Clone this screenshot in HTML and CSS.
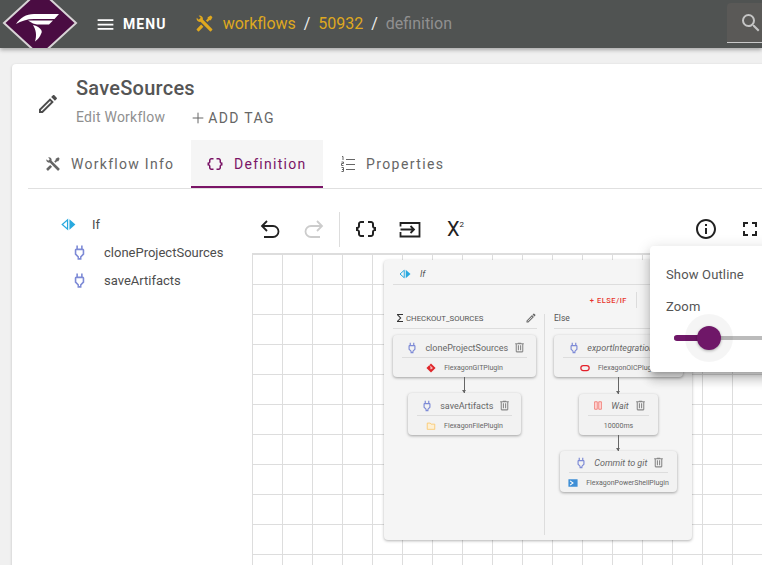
FILE: index.html
```html
<!DOCTYPE html>
<html lang="en">
<head>
<meta charset="utf-8">
<title>SaveSources</title>
<link rel="stylesheet" href="styles.css">
</head>
<body>
<div class="page">
  <header class="bar">
    <svg class="logo" viewBox="0 0 80 48" width="80" height="48">
      <polygon points="40,-10 76,23 40,56 4,23" fill="#4a0c42" stroke="#d8d4d6" stroke-width="2"/>
      <path d="M16 24C20 18 26 14 34 14H59L54.500 19H34C27 19 21 21 16 24Z" fill="#fff"/>
      <path d="M28 20.500H53L49 24.500H37L33 23.500ZM33 25C38 26 44 30 41 34C40 37 38 39 35 41.500C37 35 36 30 33 25Z" fill="#fff"/>
    </svg>
    <button class="menu">
      <svg class="menu-ic" viewBox="0 0 24 24"><path d="M3 18h18v-2H3v2zm0-5h18v-2H3v2zm0-7v2h18V6H3z"/></svg>
      <span>MENU</span>
    </button>
    <nav class="crumbs">
      <svg class="crumb-ic gold" viewBox="0 0 24 24"><use href="#tools"/></svg>
      <span class="gold link">workflows</span>
      <span class="sep">/</span>
      <span class="gold">50932</span>
      <span class="sep">/</span>
      <span class="current">definition</span>
    </nav>
    <div class="search">
      <svg class="ic24" viewBox="0 0 24 24"><path d="M15.500 14h-.79l-.28-.27A6.471 6.471 0 0 0 16 9.500 6.500 6.500 0 1 0 9.500 16c1.610 0 3.090-.59 4.230-1.570l.27.28v.79l5 4.990L20.490 19l-4.990-5zm-6 0C7.010 14 5 11.990 5 9.500S7.010 5 9.500 5 14 7.010 14 9.500 11.990 14 9.500 14z"/></svg>
    </div>
  </header>

  <main class="card">
    <section class="title-row">
      <svg class="edit-ic" viewBox="0 0 24 24"><use href="#pencil"/></svg>
      <div class="title-text">
        <h1>SaveSources</h1>
        <div class="sub">
          <span class="sub-label">Edit Workflow</span>
          <span class="add-tag"><svg viewBox="0 0 24 24"><path d="M20 12H4M12 4v16" fill="none" stroke="#666" stroke-width="1.500"/></svg>ADD TAG</span>
        </div>
      </div>
    </section>

    <div class="tabs">
      <div class="tab tab-info"><svg viewBox="0 0 24 24"><use href="#tools"/></svg>Workflow Info</div>
      <div class="tab tab-def active"><svg viewBox="0 0 24 24"><use href="#braces"/></svg>Definition</div>
      <div class="tab tab-props"><svg viewBox="0 0 14 16"><path d="M5 3.500h9M5 8.500h9M5 13.500h9M1 .5h1v3.500M.5 6h2v1.500h-2V9.500h2M.5 11.500h2v4h-2M1 13.500h1.500" fill="none" stroke="#666" stroke-width="1"/></svg>Properties</div>
    </div>

    <div class="workspace">
      <aside class="tree">
        <div class="tree-row root">
          <svg class="if-ic" viewBox="0 0 24 24"><use href="#if"/></svg><span>If</span>
        </div>
        <div class="tree-row child">
          <svg class="plug" viewBox="0 0 24 24"><use href="#plug"/></svg><span>cloneProjectSources</span>
        </div>
        <div class="tree-row child">
          <svg class="plug" viewBox="0 0 24 24"><use href="#plug"/></svg><span>saveArtifacts</span>
        </div>
      </aside>

      <div class="editor">
        <div class="toolbar">
          <svg class="tool" viewBox="0 0 24 24"><path d="M9 14 4 9l5-5M4 9h11a5.500 5.500 0 0 1 0 11H6" fill="none" stroke="#222" stroke-width="1.800"/></svg>
          <svg class="tool" viewBox="0 0 24 24"><path d="M15 14l5-5-5-5M20 9H9a5.500 5.500 0 0 0 0 11h9" fill="none" stroke="#ccc" stroke-width="1.800"/></svg>
          <span class="tool-div"></span>
          <svg class="tool" viewBox="0 0 24 24"><use href="#braces"/></svg>
          <svg class="tool" viewBox="0 0 24 24"><path d="M2.500 9.500V6h19v13.500h-19V15M2.500 12.500h13.500M12.500 9l3.500 3.500-3.500 3.500" fill="none" stroke="#222" stroke-width="1.800"/></svg>
          <span class="tool x-tool">X<sup>2</sup></span>
          <svg class="tool right" viewBox="0 0 24 24"><path d="M11 7h2v2h-2zm0 4h2v6h-2zm1-9C6.480 2 2 6.480 2 12s4.480 10 10 10 10-4.480 10-10S17.520 2 12 2zm0 18c-4.410 0-8-3.590-8-8s3.590-8 8-8 8 3.590 8 8-3.590 8-8 8z"/></svg>
          <svg class="tool" viewBox="0 0 24 24"><path d="M7 14H5v5h5v-2H7v-3zm-2-4h2V7h3V5H5v5zm12 7h-3v2h5v-5h-2v3zM14 5v2h3v3h2V5h-5z"/></svg>
        </div>

        <div class="canvas">
          <div class="if-card">
            <div class="if-head"><svg viewBox="0 0 24 24"><use href="#if"/></svg><em>If</em></div>
            <div class="if-actions"><span class="else-if">+ ELSE/IF</span><span class="act-div"></span></div>
            <div class="branches">
              <div class="branch first">
                <div class="branch-head"><svg class="sigma" viewBox="0 0 24 24"><path d="M18 6H8.830L14.830 12 8.830 18H18V20H6V18L12 12 6 6V4H18V6Z"/></svg><span>CHECKOUT_SOURCES</span><svg class="br-edit" viewBox="0 0 24 24"><use href="#pencil"/></svg></div>
                <div class="flow">
                  <div class="node w143">
                    <div class="node-top"><svg class="plug" viewBox="0 0 24 24"><use href="#plug"/></svg><span>cloneProjectSources</span><svg class="trash" viewBox="0 0 24 24"><use href="#trash"/></svg></div>
                    <div class="node-sub"><svg viewBox="0 0 24 24"><path d="M12 1 23 12 12 23 1 12Z" fill="#e0272b"/><path d="M9 6l3 3v6M12 12l4 0" stroke="#fff" stroke-width="2" fill="none"/></svg><span>FlexagonGITPlugin</span></div>
                  </div>
                  <div class="arrow"></div>
                  <div class="node w113">
                    <div class="node-top"><svg class="plug" viewBox="0 0 24 24"><use href="#plug"/></svg><span>saveArtifacts</span><svg class="trash" viewBox="0 0 24 24"><use href="#trash"/></svg></div>
                    <div class="node-sub"><svg viewBox="0 0 24 24"><path d="M3 5h7l2 2.500h9V20H3Z" fill="#fdf0d5" stroke="#fbc86b" stroke-width="2"/></svg><span>FlexagonFilePlugin</span></div>
                  </div>
                </div>
              </div>
              <div class="branch second">
                <div class="branch-head"><span>Else</span></div>
                <div class="flow">
                  <div class="node w129 ital">
                    <div class="node-top"><svg class="plug" viewBox="0 0 24 24"><use href="#plug"/></svg><span>exportIntegration</span><svg class="trash" viewBox="0 0 24 24"><use href="#trash"/></svg></div>
                    <div class="node-sub"><svg viewBox="0 0 24 24"><rect x="2" y="6" width="20" height="12" rx="6" fill="none" stroke="#e3202a" stroke-width="3"/></svg><span>FlexagonOICPlugin</span></div>
                  </div>
                  <div class="arrow a17"></div>
                  <div class="node w79 ital short">
                    <div class="node-top n22"><svg viewBox="0 0 24 24" class="pause"><path d="M3 2h7v20H3zM14 2h7v20h-7z" fill="#fdd" stroke="#f0685f" stroke-width="2"/></svg><span>Wait</span><svg class="trash" viewBox="0 0 24 24"><use href="#trash"/></svg></div>
                    <div class="node-sub"><span>10000ms</span></div>
                  </div>
                  <div class="arrow"></div>
                  <div class="node w117 ital short">
                    <div class="node-top n22"><svg class="plug" viewBox="0 0 24 24"><use href="#plug"/></svg><span>Commit to git</span><svg class="trash" viewBox="0 0 24 24"><use href="#trash"/></svg></div>
                    <div class="node-sub"><svg viewBox="0 0 24 24"><rect x="1" y="3" width="22" height="18" fill="#3f8fd6"/><path d="M5 7l7 5-7 5" fill="none" stroke="#fff" stroke-width="2.500"/></svg><span>FlexagonPowerShellPlugin</span></div>
                  </div>
                </div>
              </div>
            </div>
          </div>
        </div>
      </div>
    </div>
  </main>

  <div class="popover">
    <div class="pop-row">Show Outline</div>
    <div class="pop-row">Zoom</div>
    <div class="slider"><span class="fill"></span><span class="halo"></span><span class="thumb"></span></div>
  </div>
</div>

<svg class="defs" width="0" height="0" aria-hidden="true">
  <defs>
    <path id="tools" d="M21.710 20.290L20.290 21.710A1 1 0 0 1 18.880 21.710L7 9.850A3.810 3.810 0 0 1 6 10A4 4 0 0 1 2.220 4.700L4.760 7.240L5.290 6.710L6.710 5.290L7.240 4.760L4.700 2.220A4 4 0 0 1 10 6A3.810 3.810 0 0 1 9.850 7L21.710 18.880A1 1 0 0 1 21.710 20.290M2.290 18.880A1 1 0 0 0 2.290 20.290L3.710 21.710A1 1 0 0 0 5.120 21.710L10.590 16.250L7.760 13.420M20 2L16 4V6L13.830 8.170L15.830 10.170L18 8H20L22 4Z"/>
    <path id="pencil" d="M14.060 9L15 9.940L5.920 19H5V18.080L14.060 9M17.660 3C17.410 3 17.150 3.100 16.960 3.290L15.130 5.120L18.880 8.870L20.710 7.040C21.100 6.650 21.100 6 20.710 5.630L18.370 3.290C18.170 3.090 17.920 3 17.660 3M14.060 6.190L3 17.250V21H6.750L17.810 9.940L14.060 6.190Z"/>
    <path id="braces" d="M4 7v2c0 .55-.45 1-1 1H2v4h1c.55 0 1 .45 1 1v2c0 1.650 1.350 3 3 3h3v-2H7c-.55 0-1-.45-1-1v-2c0-1.300-.84-2.420-2-2.830v-.34C5.160 11.420 6 10.300 6 9V7c0-.55.45-1 1-1h3V4H7C5.350 4 4 5.350 4 7zm17 3c-.55 0-1-.45-1-1V7c0-1.650-1.350-3-3-3h-3v2h3c.55 0 1 .45 1 1v2c0 1.300.84 2.420 2 2.830v.34c-1.160.41-2 1.520-2 2.830v2c0 .55-.45 1-1 1h-3v2h3c1.650 0 3-1.350 3-3v-2c0-.55.45-1 1-1h1v-4h-1z"/>
    <path id="plug" fill-rule="evenodd" d="M16 7V3H14V7H10V3H8V7C6.900 7 6 7.900 6 9V14.500L9.500 18V21H14.500V18L18 14.500V9C18 7.900 17.100 7 16 7ZM16 13.670L12.670 17V19H11.330V17L8 13.670V9H16Z"/>
    <path id="trash" d="M9 3V4H4V6H5V19A2 2 0 0 0 7 21H17A2 2 0 0 0 19 19V6H20V4H15V3H9M7 6H17V19H7V6M9 8V17H11V8H9M13 8V17H15V8H13Z"/>
    <g id="if"><path d="M10.500 4.500V19.500L2 12Z" fill="none" stroke="currentColor" stroke-width="2"/><path d="M13.500 3.500V20.500L23 12Z" fill="currentColor"/></g>
  </defs>
</svg>
</body>
</html>
```

FILE: styles.css
```css
* { box-sizing: border-box; }
html, body { margin: 0; width: 762px; height: 565px; overflow: hidden; }
body { background: #f0f0f0; font-family: Roboto, "Liberation Sans", sans-serif; color: #4d4d4d; }
.page { position: relative; width: 762px; height: 565px; overflow: hidden; }
.defs { position: absolute; }

.bar { position: relative; z-index: 2; height: 48px; background: #505352; display: flex; align-items: center; box-shadow: 0 2px 4px rgba(0,0,0,.3); }
.logo { flex: none; overflow: hidden; }
.menu { display: flex; align-items: center; gap: 7px; margin-left: 15px; padding: 0; border: 0; background: none; color: #fff; font: 700 14px Roboto, sans-serif; letter-spacing: 1.100px; }
.menu-ic { width: 21px; height: 21px; fill: #fff; }
.ic24 { width: 24px; height: 24px; fill: #c4c4c4; }
.crumbs { display: flex; align-items: center; margin: -1px 0 0 29px; font-size: 16px; }
.gold { color: #dfa81f; }
.crumb-ic { width: 19px; height: 19px; margin: 0 9px 0 -1px; fill: currentColor; }
.sep { color: #eee; width: 22.500px; text-align: center; }
.current { color: #909090; }
.search { align-self: flex-start; margin: 3px 0 0 auto; width: 35px; height: 40px; background: #5a5957; border-bottom: 1px solid #c9c9c9; border-radius: 4px 0 0 0; padding: 8px 0 0 12px; overflow: hidden; }

.card { margin: 16px 0 0 12px; width: 770px; height: 520px; background: #fff; border-radius: 4px; box-shadow: 0 1px 3px rgba(0,0,0,.2); }
.title-row { display: flex; padding: 12px 0 0 24px; height: 76px; }
.edit-ic { width: 24px; height: 24px; margin-top: 16px; fill: #4d4d4d; }
.title-text { margin-left: 16px; }
h1 { margin: 0; font-size: 20px; line-height: 24px; font-weight: 500; color: #555; letter-spacing: .25px; }
.sub { display: flex; align-items: center; margin-top: 5px; height: 24px; }
.sub-label { font-size: 14px; color: #8f8f8f; letter-spacing: .25px; }
.add-tag { display: flex; align-items: center; margin-left: 25px; font-size: 14px; color: #666; letter-spacing: 1.350px; margin-top: 2px; }
.add-tag svg { width: 16px; height: 16px; margin-right: 2px; }

.tabs { display: flex; margin-left: 16px; height: 49px; border-bottom: 1px solid #e0e0e0; border-radius: 6px 0 0 0; }
.tab { display: flex; align-items: center; height: 48px; font-size: 14px; letter-spacing: 1.280px; color: #666; }
.tab svg { flex: none; fill: currentColor; }
.tab-info { width: 163px; padding-left: 17px; }
.tab-info svg { width: 16px; height: 16px; margin-right: 10px; }
.tab-def { width: 132px; padding-left: 15px; }
.tab-def svg { width: 18px; height: 18px; margin-right: 10px; }
.tab-props { padding-left: 18px; letter-spacing: 1.400px; }
.tab-props svg { width: 14px; height: 16px; margin-right: 11px; }
.active { background: #f5f5f5; color: #7a1466; box-shadow: inset 0 -2px 0 #7a1466; }

.workspace { display: flex; }
.tree { width: 240px; padding-top: 21px; font-size: 13px; color: #4d4d4d; }
.tree-row { display: flex; align-items: center; height: 28px; }
.root { padding-left: 49px; }
.child { padding-left: 58px; }
.if-ic { width: 15px; height: 15px; color: #28a9df; margin-right: 16px; }
.plug { fill: #7d8ad6; }
.child .plug { width: 19px; height: 19px; margin-right: 15px; }

.editor { width: 530px; }
.toolbar { display: flex; align-items: center; gap: 20px; height: 64px; padding: 16px 20px 0 6px; }
.tool { flex: none; width: 24px; height: 24px; fill: #222; }
.tool-div { flex: none; width: 1px; height: 35px; background: #ddd; margin: 0 -6px 0 -7px; }
.x-tool { width: auto; font-size: 20px; line-height: 24px; color: #222; margin-left: 5px; }
.x-tool sup { font-size: 8px; vertical-align: 9px; line-height: 0; }
.right { margin-left: auto; }

.canvas { position: relative; height: 320px; border-top: 1px solid #ddd; border-left: 1px solid #ddd; background-image: linear-gradient(#ddd 1px, transparent 1px), linear-gradient(90deg, #ddd 1px, transparent 1px); background-size: 30px 30px; background-position: -1px 0; }
.if-card { position: absolute; left: 131px; top: 6px; width: 308px; height: 280px; background: #f5f5f5; border-radius: 4px; box-shadow: 0 1px 3px rgba(0,0,0,.3); font-size: 9px; color: #555; }
.if-head { display: flex; align-items: center; height: 25px; margin: 0 9px; padding: 3px 0 0 6px; border-bottom: 1px solid #ddd; }
.if-head svg { width: 12px; height: 12px; color: #28a9df; margin-right: 9px; }
.if-actions { display: flex; justify-content: flex-end; align-items: center; height: 25px; padding: 5px 55px 0 0; }
.else-if { font-size: 7.500px; font-weight: 500; color: #e8352e; letter-spacing: .55px; margin-right: 9px; padding-top: 1px; }
.act-div { width: 1px; height: 16px; background: #ddd; }
.branches { display: flex; height: 230px; }
.branch { display: flex; flex-direction: column; }
.first { position: relative; width: 161px; padding: 0 8px 0 9px; height: 225px; }
.first::after { content: ""; position: absolute; right: 0; top: 4px; bottom: 0; width: 1px; background: #ddd; }
.second { padding-left: 9px; flex: 1; }
.branch-head { display: flex; align-items: center; height: 19px; padding-bottom: 2px; border-bottom: 1px solid #ddd; font-size: 8.500px; margin-bottom: 6px; }
.first .branch-head { padding-left: 2px; font-size: 7.800px; }
.sigma { width: 12px; height: 12px; fill: #333; margin-right: 0; margin-left: -1px; }
.br-edit { width: 12px; height: 12px; fill: #666; margin-left: auto; }
.flow { display: flex; flex-direction: column; }
.first .flow { align-items: center; width: 143px; }
.second .flow { align-items: center; width: 129px; }
.node { flex: none; height: 42px; background: #f2f2f2; border-radius: 4px; box-shadow: 0 1px 3px rgba(0,0,0,.35); padding: 0 9px; }
.short { height: 41px; }
.w143 { width: 143px; }
.w113 { width: 113px; }
.w129 { width: 129px; }
.w79 { width: 79px; }
.w117 { width: 117px; }
.node-top { display: flex; align-items: center; justify-content: center; height: 23px; padding-top: 3px; border-bottom: 1px solid #ddd; font-size: 9px; color: #666; white-space: nowrap; }
.n22 { height: 22px; padding-top: 2px; }
.ital .node-top span { font-style: italic; }
.node-top .plug { width: 14px; height: 14px; margin: 0 6.500px 0 2px; flex: none; }
.pause { width: 10px; height: 9px; margin: 0 8px 0 3px; flex: none; }
.trash { width: 13px; height: 13px; fill: #888; margin-left: 5px; flex: none; }
.node-sub { display: flex; align-items: center; justify-content: center; height: 19px; font-size: 7px; color: #666; white-space: nowrap; }
.node-sub svg { width: 10px; height: 10px; margin-right: 8px; flex: none; }
.arrow { position: relative; flex: none; width: 1px; height: 16px; background: #666; }
.a17 { height: 17px; }
.arrow::after { content: ""; position: absolute; left: -2px; bottom: 0; border-top: 3px solid #666; border-left: 2.500px solid transparent; border-right: 2.500px solid transparent; }

.popover { position: absolute; z-index: 3; left: 650px; top: 246px; width: 130px; height: 126px; background: #fff; border-radius: 4px; box-shadow: 0 5px 5px -3px rgba(0,0,0,.2), 0 8px 10px 1px rgba(0,0,0,.14), 0 3px 14px 2px rgba(0,0,0,.12); padding: 18px 16px 0; font-size: 13px; letter-spacing: .15px; color: #555; }
.pop-row { height: 22px; line-height: 22px; margin-bottom: 10px; }
.slider { position: relative; height: 4px; margin: 18px -20px 0 8px; background: #bbb; }
.fill { position: absolute; left: 0; top: -1px; width: 36px; height: 6px; background: #6f1768; border-radius: 3px; }
.halo { position: absolute; left: 11px; top: -22px; width: 48px; height: 48px; border-radius: 50%; background: rgba(0,0,0,.04); }
.thumb { position: absolute; left: 23px; top: -10px; width: 24px; height: 24px; border-radius: 50%; background: #6f1768; box-shadow: 0 1px 3px rgba(0,0,0,.3); }
```
